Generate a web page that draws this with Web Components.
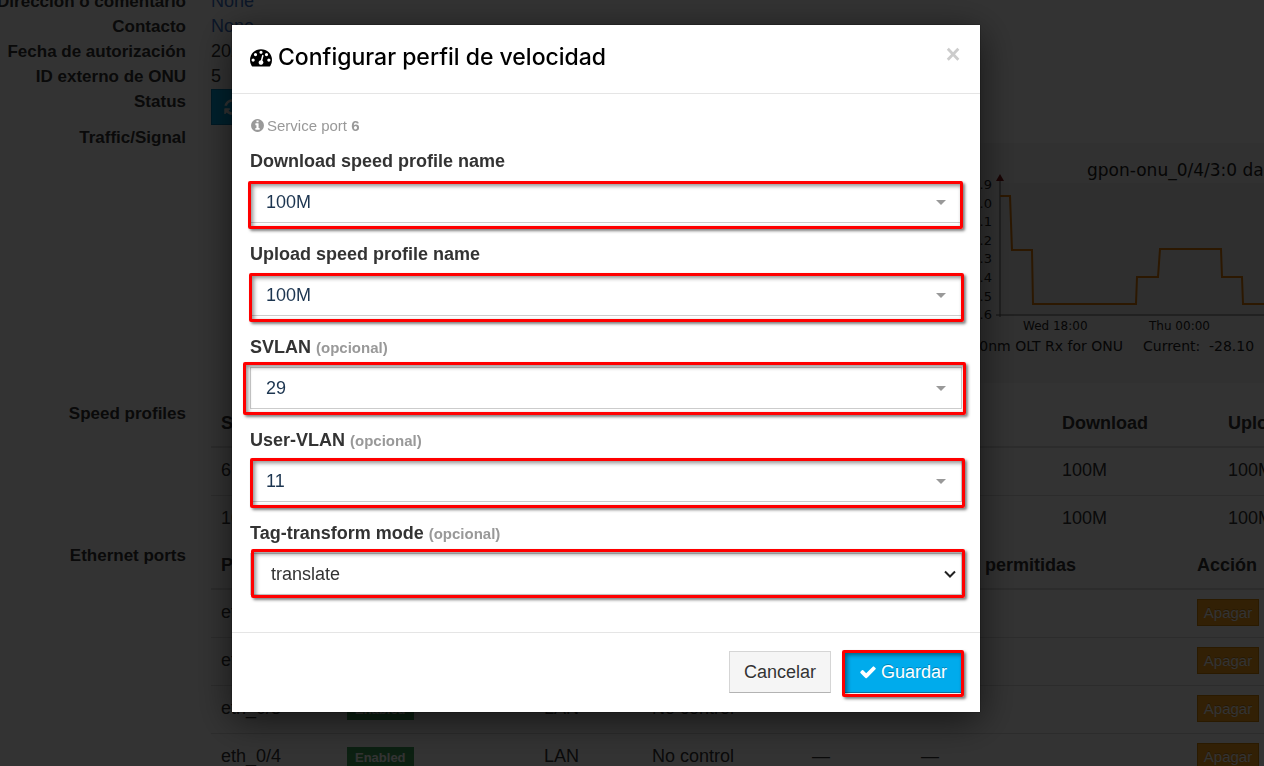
<!DOCTYPE html>
<html lang="es">
<head>
<meta charset="utf-8">
<title>Configurar perfil de velocidad</title>
<style>
html, body { margin: 0; height: 100%; overflow: hidden; }
body { background: #fff; color: #333; font: 18px/25px "Liberation Sans", Arial, sans-serif; }
</style>
</head>
<body>
<onu-page></onu-page>
<modal-dialog>
  <fa-icon slot="icon" name="gauge" style="--size:22px"></fa-icon>
  <span slot="title">Configurar perfil de velocidad</span>
  <service-note port="6"></service-note>
  <profile-field label="Download speed profile name" value="100M" style="--frame:0 -1px -6px -2px"></profile-field>
  <profile-field label="Upload speed profile name" value="100M" style="--frame:-1px -2px -6px -1px"></profile-field>
  <profile-field label="SVLAN" value="29" optional style="--frame:-5px -4px -6px -7px"></profile-field>
  <profile-field label="User-VLAN" value="11" optional style="--frame:-2px -3px -6px 0"></profile-field>
  <profile-field label="Tag-transform mode" value="translate" optional plain style="--frame:-4px -3px -3px 1px"></profile-field>
  <action-button slot="actions">Cancelar</action-button>
  <action-button slot="actions" primary style="--frame:-1px -2px -4px -2px"><fa-icon name="check" style="--size:18px"></fa-icon>Guardar</action-button>
</modal-dialog>

<script>
const ICONS = {
  gauge: 'M384 1152q0-53-37.5-90.5t-90.5-37.5-90.5 37.5-37.5 90.5 37.5 90.5 90.5 37.5 90.5-37.5 37.5-90.5zm192-448q0-53-37.5-90.5t-90.5-37.5-90.5 37.5-37.5 90.5 37.5 90.5 90.5 37.5 90.5-37.5 37.5-90.5zm428 481l101-382q6-26-7.5-48.5t-38.5-29.5-48 6.5-30 39.5l-101 382q-60 5-107 43.5t-63 98.5q-20 77 20 146t117 89 146-20 89-117q16-60-6-117t-72-91zm660-33q0-53-37.5-90.5t-90.5-37.5-90.5 37.5-37.5 90.5 37.5 90.5 90.5 37.5 90.5-37.5 37.5-90.5zm-640-640q0-53-37.5-90.5t-90.5-37.5-90.5 37.5-37.5 90.5 37.5 90.5 90.5 37.5 90.5-37.5 37.5-90.5zm448 192q0-53-37.5-90.5t-90.5-37.5-90.5 37.5-37.5 90.5 37.5 90.5 90.5 37.5 90.5-37.5 37.5-90.5zm320 448q0 261-141 483-19 29-54 29h-1402q-35 0-54-29-141-221-141-483 0-182 71-348t191-286 286-191 348-71 348 71 286 191 191 286 71 348z',
  info: 'M1152 1376v-160q0-14-9-23t-23-9h-96v-512q0-14-9-23t-23-9h-320q-14 0-23 9t-9 23v160q0 14 9 23t23 9h96v320h-96q-14 0-23 9t-9 23v160q0 14 9 23t23 9h448q14 0 23-9t9-23zm-128-896v-160q0-14-9-23t-23-9h-192q-14 0-23 9t-9 23v160q0 14 9 23t23 9h192q14 0 23-9t9-23zm640 416q0 209-103 385.5t-279.5 279.5-385.5 103-385.5-103-279.5-279.5-103-385.5 103-385.5 279.5-279.5 385.5-103 385.5 103 279.5 279.5 103 385.5z',
  check: 'M1671 566q0 40-28 68l-724 724-136 136q-28 28-68 28t-68-28l-136-136-362-362q-28-28-28-68t28-68l136-136q28-28 68-28t68 28l294 295 656-657q28-28 68-28t68 28l136 136q28 28 28 68z',
  refresh: 'M1639 1056q0 5-1 7-64 268-268 434.5t-478 166.5q-146 0-282.5-55t-243.5-157l-129 129q-19 19-45 19t-45-19-19-45v-448q0-26 19-45t45-19h448q26 0 45 19t19 45-19 45l-137 137q71 66 161 102t187 36q134 0 250-65t186-179q11-17 53-117 8-23 30-23h192q13 0 22.5 9.5t9.5 22.5zm25-800v448q0 26-19 45t-45 19h-448q-26 0-45-19t-19-45 19-45l138-138q-148-137-349-137-134 0-250 65t-186 179q-11 17-53 117-8 23-30 23h-199q-13 0-22.5-9.5t-9.5-22.5v-7q65-268 270-434.5t480-166.5q146 0 284 55.5t245 156.5l130-129q19-19 45-19t45 19 19 45z'
};

/* Open frame drawn over a control to call attention to it. */
const FRAME = `
  .frame { position: absolute; inset: var(--frame); border: 3px solid #f00; border-radius: 2px;
    box-shadow: 2px 2px 3px rgba(0,0,0,.5), inset 2px 2px 4px rgba(0,0,0,.45); pointer-events: none; }`;

class Base extends HTMLElement {
  connectedCallback() {
    if (!this.shadowRoot) this.attachShadow({ mode: 'open' }).innerHTML = this.view();
  }
}

class FaIcon extends Base {
  view() {
    return `<style>:host{display:inline-flex;flex:none}svg{width:var(--size,16px);height:var(--size,16px);fill:currentColor;display:block}</style>
    <svg viewBox="0 0 1792 1792" aria-hidden="true"><path d="${ICONS[this.getAttribute('name')]}"/></svg>`;
  }
}

class ServiceNote extends Base {
  view() {
    return `<style>:host{display:flex;align-items:center;gap:2px;margin-bottom:11px;color:#999;font-size:15px}</style>
    <fa-icon name="info" style="--size:15px"></fa-icon><span>Service port <b>${this.getAttribute('port')}</b></span>`;
  }
}

class ProfileField extends Base {
  view() {
    const plain = this.hasAttribute('plain');
    return `<style>
      :host { display: block; margin-bottom: 19px; }
      :host(:last-of-type) { margin-bottom: 0; }
      label { display: block; margin-bottom: 7px; font-weight: bold; }
      small { font-size: 15px; color: #999; }
      .control { position: relative; display: flex; }
      select { appearance: none; flex: 1; min-width: 0; height: 42px; margin: 0; padding: 0 40px 0 ${plain ? 20 : 15}px;
        border: 1px solid #ccc; border-radius: 0; background: #fff; color: ${plain ? '#333' : '#1c3550'}; font: inherit; }
      .arrow { position: absolute; right: ${plain ? 6 : 16}px; top: 15px; width: ${plain ? 12 : 10}px; height: 12px; pointer-events: none; }
      ${FRAME}
    </style>
    <label for="s">${this.getAttribute('label')}${this.hasAttribute('optional') ? ' <small>(opcional)</small>' : ''}</label>
    <div class="control">
      <select id="s"><option>${this.getAttribute('value')}</option></select>
      ${plain ? '<svg class="arrow" viewBox="0 0 12 12"><path d="M1 3.5l5 5 5-5" fill="none" stroke="#222" stroke-width="2"/></svg>'
              : '<svg class="arrow" viewBox="0 0 10 12"><path d="M0 4h10L5 9z" fill="#999"/></svg>'}
      <div class="frame"></div>
    </div>`;
  }
}

class ActionButton extends Base {
  view() {
    const primary = this.hasAttribute('primary');
    return `<style>
      :host { display: block; position: relative; }
      button { display: flex; align-items: center; gap: 4px; height: 42px; margin: 0; padding: 0 14px; font: inherit; border-radius: 0;
        border: 1px solid ${primary ? '#0592cf' : '#d5d5d5'}; border-bottom-color: ${primary ? '#0378ab' : '#b3b3b3'};
        background: ${primary ? '#00abec' : '#f5f5f5'}; color: ${primary ? '#fff' : '#333'};
        text-shadow: ${primary ? '0 -1px 0 rgba(0,0,0,.25)' : '0 1px 1px rgba(255,255,255,.75)'}; }
      ${FRAME}
    </style><button type="button"><slot></slot></button>${primary ? '<div class="frame"></div>' : ''}`;
  }
}

class ModalDialog extends Base {
  view() {
    return `<style>
      :host { position: fixed; inset: 0; display: flex; justify-content: center; align-items: flex-start;
        padding: 25px 52px 0 0; background: rgba(0,0,0,.8); }
      .card { flex: 0 1 748px; background: #fff; box-shadow: 0 0 1px #000, 0 8px 36px rgba(0,0,0,.6); }
      header { display: flex; align-items: center; gap: 6px; padding: 16px 18px 20px; border-bottom: 1px solid #e5e5e5; color: #000; }
      h3 { flex: 1; margin: 0; font: 500 23px/32px Inter, sans-serif; }
      .close { align-self: flex-start; width: 18px; height: 27px; padding: 0; border: 0; background: none; color: #ccc; font: bold 25px/27px "Liberation Sans", sans-serif; }
      main { padding: 19px 18px 37px; }
      footer { display: flex; justify-content: flex-end; gap: 13px; padding: 18px 18px 19px; border-top: 1px solid #e5e5e5; }
    </style>
    <section class="card" role="dialog" aria-modal="true" aria-labelledby="t">
      <header><slot name="icon"></slot><h3 id="t"><slot name="title"></slot></h3><button class="close" type="button" aria-label="Cerrar">×</button></header>
      <main><slot></slot></main>
      <footer><slot name="actions"></slot></footer>
    </section>`;
  }
}

class InfoRow extends Base {
  view() {
    return `<style>
      :host { display: grid; grid-template-columns: 186px minmax(0, 1fr); column-gap: 25px; min-height: var(--h, 25px); }
      b { display: flex; justify-content: flex-end; white-space: nowrap; font-size: 17px; }
    </style><b>${this.getAttribute('label')}</b><div><slot></slot></div>`;
  }
}

class SignalChart extends Base {
  view() {
    const ticks = ['-27.9', '-28.0', '-28.1', '-28.2', '-28.3', '-28.4', '-28.5', '-28.6']
      .map((t, i) => `<text x="71" y="${46 + Math.round(i * 18.6)}" text-anchor="end" font-size="13">${t}</text>`).join('');
    return `<style>
      :host { display: flex; justify-content: flex-end; padding-top: 18px; }
      svg { display: block; background: #f3f3f3; }
      text { font-family: "DejaVu Sans", sans-serif; fill: #222; }
    </style>
    <svg width="343" height="240" viewBox="0 0 343 240">
      <path d="M79 40h264v131H79z" fill="#ececec"/>
      <text x="166" y="33" font-size="17">gpon-onu_0/4/3:0 daily</text>
      ${ticks}
      <path d="M79 38v136M75 172h268" stroke="#555" fill="none"/>
      <path d="M75 38l4-7 4 7z" fill="#7f1010"/>
      <path d="M79 53h10l2 54h20l1 54h103l1-27h21l2-28h61l1 28h20l1 27h23" fill="none" stroke="#d97706" stroke-width="2"/>
      <text x="102" y="187" font-size="12">Wed 18:00</text>
      <text x="228" y="187" font-size="12">Thu 00:00</text>
      <text x="202" y="208" font-size="14" text-anchor="end">1310nm OLT Rx for ONU</text>
      <text x="222" y="208" font-size="14">Current:</text>
      <text x="288" y="208" font-size="14">-28.10</text>
    </svg>`;
  }
}

class DataTable extends Base {
  view() {
    const t = TABLES[this.getAttribute('kind')];
    return `<style>
      :host { display: block; margin-top: -1px; }
      table { width: calc(100% + 90px); table-layout: fixed; border-collapse: separate; border-spacing: 0; }
      th, td { padding: 10px 0 12px 10px; text-align: left; line-height: 25px; white-space: nowrap; }
      th { padding: 11px 0 10px 10px; border-bottom: 2px solid #ddd; }
      tr + tr td { border-top: 1px solid #ddd; }
      .tag { display: inline-block; padding: 0 8px; background: #3c9f58; color: #fff; font: bold 13px/21px "Liberation Sans", sans-serif; vertical-align: middle; }
      td button { display: block; width: 62px; height: 27px; margin: -1px 0; padding: 0; border: 1px solid #d08000; background: #f89f1b; color: #fff; font: 15px/25px "Liberation Sans", sans-serif; text-shadow: 0 -1px 0 rgba(0,0,0,.25); }
    </style>
    <table><colgroup>${t.cols.map(w => `<col${w ? ` style="width:${w}px"` : ''}>`).join('')}</colgroup>
      <thead><tr>${t.head.map(h => `<th>${h}</th>`).join('')}</tr></thead>
      <tbody>${t.rows.map(r => `<tr>${r.map(c => `<td>${c}</td>`).join('')}</tr>`).join('')}</tbody>
    </table>`;
  }
}
const port = n => ['eth_0/' + n, '<span class="tag">Enabled</span>', 'LAN', 'No control', '—', '—', '<button type="button">Apagar</button>'];
const TABLES = {
  speed: {
    cols: [841, 166, 0],
    head: ['Service-port ID', 'Download', 'Upload'],
    rows: [['6', '100M', '100M'], ['10', '100M', '100M']]
  },
  ports: {
    cols: [126, 197, 108, 160, 109, 276, 0],
    head: ['Port', 'Admin state', 'Mode', 'DHCP', 'VLAN', 'VLANs permitidas', 'Acción'],
    rows: [port(1), port(2), port(3), port(4)]
  }
};

class OnuPage extends Base {
  view() {
    return `<style>
      :host { display: block; height: 100vh; overflow: hidden; }
      .scroll { margin-top: -11px; }
      a { color: #3a6fc4; text-decoration: none; }
      .status { display: flex; align-items: center; height: 36px; margin: 0; padding: 0 11px; border: 1px solid #0080b8; background: #00a5e0; color: #fff; font: inherit; gap: 6px; }
    </style>
    <div class="scroll">
      <info-row label="Dirección o comentario"><a href="#">None</a></info-row>
      <info-row label="Contacto"><a href="#">None</a></info-row>
      <info-row label="Fecha de autorización">2021</info-row>
      <info-row label="ID externo de ONU">5</info-row>
      <info-row label="Status" style="--h:36px"><button class="status" type="button" aria-label="Refresh"><fa-icon name="refresh" style="--size:18px"></fa-icon></button></info-row>
      <info-row label="Traffic/Signal" style="--h:276px"><signal-chart></signal-chart></info-row>
      <info-row label="Speed profiles"><data-table kind="speed"></data-table></info-row>
      <info-row label="Ethernet ports"><data-table kind="ports"></data-table></info-row>
    </div>`;
  }
}

customElements.define('fa-icon', FaIcon);
customElements.define('service-note', ServiceNote);
customElements.define('profile-field', ProfileField);
customElements.define('action-button', ActionButton);
customElements.define('modal-dialog', ModalDialog);
customElements.define('info-row', InfoRow);
customElements.define('signal-chart', SignalChart);
customElements.define('data-table', DataTable);
customElements.define('onu-page', OnuPage);
</script>
</body>
</html>
